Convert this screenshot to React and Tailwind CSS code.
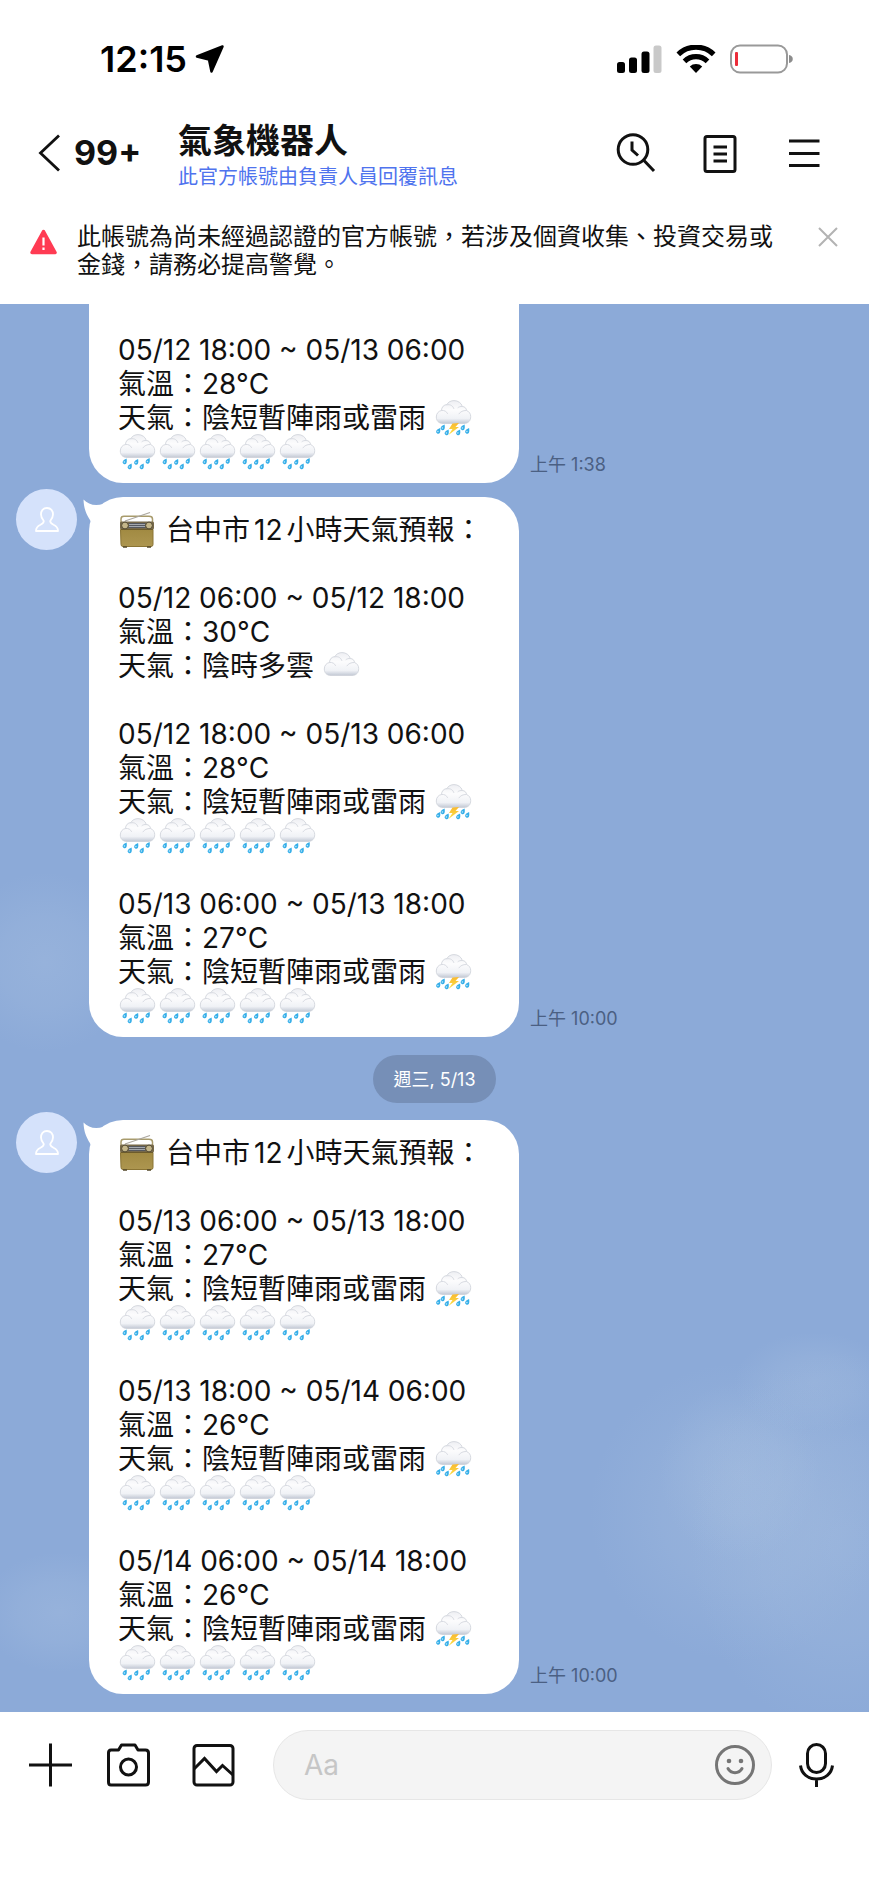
const RAIN = ["rain", "rain", "rain", "rain", "rain"];
const SHOWER = "陰短暫陣雨或雷雨";

const firstMessage = [
  { range: "05/12 18:00 ~ 05/13 06:00", temp: "28°C", weather: SHOWER, icon: "storm", extra: RAIN },
];

const secondMessage = [
  { range: "05/12 06:00 ~ 05/12 18:00", temp: "30°C", weather: "陰時多雲", icon: "cloud", extra: [] },
  { range: "05/12 18:00 ~ 05/13 06:00", temp: "28°C", weather: SHOWER, icon: "storm", extra: RAIN },
  { range: "05/13 06:00 ~ 05/13 18:00", temp: "27°C", weather: SHOWER, icon: "storm", extra: RAIN },
];

const thirdMessage = [
  { range: "05/13 06:00 ~ 05/13 18:00", temp: "27°C", weather: SHOWER, icon: "storm", extra: RAIN },
  { range: "05/13 18:00 ~ 05/14 06:00", temp: "26°C", weather: SHOWER, icon: "storm", extra: RAIN },
  { range: "05/14 06:00 ~ 05/14 18:00", temp: "26°C", weather: SHOWER, icon: "storm", extra: RAIN },
];

const CLOUD =
  "M9 23.5C4.500 23.500 2.300 20.500 2.300 17C2.300 13.500 4.500 11 7.500 10.500C7.500 7 10 4.600 13 4.600C14 2 17 0.600 20 0.600C24 0.600 27.500 3 28.300 6.500C30.800 6.500 32.500 8.500 32.500 10.500C35.300 11.500 36.700 14 36.700 16.500C36.700 20.500 34.500 23.500 30 23.500Z";

// gradients shared by every weather icon on the page
const Gradients = () => (
  <svg className="absolute h-0 w-0" aria-hidden="true">
    <defs>
      <linearGradient id="cloudFill" x1="0" y1="0" x2="0" y2="1">
        <stop offset="0" stopColor="#eeeff3" />
        <stop offset="0.4" stopColor="#fcfcfd" />
        <stop offset="0.78" stopColor="#f0f2f6" />
        <stop offset="1" stopColor="#c2c8d4" />
      </linearGradient>
      <linearGradient id="boltFill" x1="0" y1="0" x2="0" y2="1">
        <stop offset="0" stopColor="#f9b92e" />
        <stop offset="1" stopColor="#fde14a" />
      </linearGradient>
      <linearGradient id="radioBody" x1="0" y1="0" x2="0" y2="1">
        <stop offset="0" stopColor="#a18a42" />
        <stop offset="1" stopColor="#ad9650" />
      </linearGradient>
      <radialGradient id="haze">
        <stop offset="0" stopColor="#b4c9e4" stopOpacity="0.26" />
        <stop offset="0.5" stopColor="#adc4e2" stopOpacity="0.2" />
        <stop offset="1" stopColor="#a9c2e2" stopOpacity="0" />
      </radialGradient>
    </defs>
  </svg>
);

const Drop = ({ x, y }) => (
  <g transform={`translate(${x} ${y}) rotate(28)`}>
    <path d="M0 -3.4C1.300 -1.500 2 -0.500 2 0.800A2 2 0 0 1 -2 0.800C-2 -0.500 -1.300 -1.500 0 -3.400Z" fill="#35aee8" />
    <circle cx="-0.3" cy="0.700" r="0.8" fill="#b9e6fa" />
  </g>
);

const WeatherIcon = ({ kind }) => (
  <svg width="40" height="36" viewBox="0 0 40 36" className="shrink-0" role="img" aria-label={kind}>
    <g transform={kind === "cloud" ? "translate(0 4)" : undefined}>
      <path d={CLOUD} fill="url(#cloudFill)" stroke="#cdd0d8" strokeWidth="0.8" />
      <path
        d="M7.500 10.500C10.500 10 12.500 11.500 13.500 13.500M13 4.800C16.500 4 19 6 19.800 8.500M32 10.500C29 10.500 26.500 11.500 25 13.800M28 6.500C26.500 6.300 25 6.800 24 7.600"
        fill="none"
        stroke="#d8dbe2"
        strokeWidth="1"
        strokeLinecap="round"
      />
    </g>
    {kind === "rain" && (
      <g>
        <Drop x={7} y={27.5} />
        <Drop x={18.500} y={28} />
        <Drop x={30} y={27} />
        <Drop x={12} y={32.5} />
        <Drop x={24} y={32.5} />
      </g>
    )}
    {kind === "storm" && (
      <g>
        <Drop x={9} y={27.5} />
        <Drop x={4.5} y={31} />
        <Drop x={13} y={32.5} />
        <Drop x={29} y={27.5} />
        <Drop x={24.500} y={32.5} />
        <Drop x={33.500} y={31} />
        <path d="M18.500 23.500L25 23L21.500 27H25L14.500 35L18.500 29H15Z" fill="url(#boltFill)" />
      </g>
    )}
  </svg>
);

const RadioIcon = () => (
  <svg width="40" height="38" viewBox="0 0 40 38" className="shrink-0" role="img" aria-label="radio">
    <path d="M3 14V8C3 6 4 5.300 6 5.300H31C33.500 5.300 34.500 6 34.500 8V14" fill="none" stroke="#a89b6c" strokeWidth="1.500" />
    <path d="M7 10L32 1.500" stroke="#aaa69e" strokeWidth="1.200" />
    <rect x="2" y="10.500" width="34" height="8" rx="1.500" fill="#77694a" />
    <rect x="10.500" y="12" width="17" height="5" fill="#55585f" />
    <path d="M11 13.500H27M11 15.500H27" stroke="#b9bcc3" strokeWidth="0.8" />
    <path d="M2.500 18.500H35V33.500Q35 35.500 33 35.500H5Q3 35.500 3 33.500Z" fill="url(#radioBody)" stroke="#8a7434" strokeWidth="1" />
    <path d="M3 18.500H35" stroke="#6c5b2b" strokeWidth="1" />
    <circle cx="7" cy="14.500" r="3.400" fill="#c4b68a" stroke="#544b33" strokeWidth="1" />
    <circle cx="31" cy="14.500" r="3.400" fill="#c4b68a" stroke="#544b33" strokeWidth="1" />
    <path d="M5 36H9M29 36H33" stroke="#54482a" strokeWidth="1.500" />
  </svg>
);

const StatusBar = () => (
  <div className="flex h-[118px] items-center justify-between pl-[100px] pr-[75px]">
    <div className="flex items-center gap-2">
      <span className="text-[36px] font-semibold leading-none text-black">12:15</span>
      <svg width="30" height="30" viewBox="0 0 30 30">
        <path d="M27.500 2.500L2 12.500L14 15.500L16.500 27.500Z" fill="#000" stroke="#000" strokeWidth="2.500" strokeLinejoin="round" />
      </svg>
    </div>
    <div className="flex items-center gap-[14px]">
      <svg width="45" height="28" viewBox="0 0 45 28">
        <rect x="0" y="17" width="8" height="11" rx="2.500" fill="#000" />
        <rect x="12" y="12.500" width="8" height="15.500" rx="2.500" fill="#000" />
        <rect x="24.500" y="6.500" width="8" height="21.500" rx="2.500" fill="#000" />
        <rect x="36.500" y="0.500" width="8" height="27.500" rx="2.500" fill="#c9c9c9" />
      </svg>
      <svg width="40" height="28" viewBox="0 0 40 28">
        <path d="M20 28L13.800 21.600A9 9 0 0 1 26.200 21.600Z" fill="#000" />
        <path d="M8.500 16.300A16.500 16.500 0 0 1 31.500 16.300" fill="none" stroke="#000" strokeWidth="5.200" />
        <path d="M2.300 9.300A25.500 25.500 0 0 1 37.700 9.300" fill="none" stroke="#000" strokeWidth="5.200" />
      </svg>
      <svg width="64" height="30" viewBox="0 0 64 30">
        <rect x="1" y="1.500" width="56" height="27" rx="9" fill="none" stroke="#999" strokeWidth="2" />
        <rect x="5" y="8" width="3" height="14" rx="1" fill="#ec2d3a" />
        <path d="M59 11C64 11.500 64 18.500 59 19Z" fill="#8c8c8c" />
      </svg>
    </div>
  </div>
);

const Header = () => (
  <header className="flex h-[70px] items-center pl-[38px] pr-[45px] text-[#111]">
    <button type="button" className="flex w-[140px] items-center gap-[13px]" aria-label="返回">
      <svg width="23" height="38" viewBox="0 0 23 38" fill="none" stroke="currentColor" strokeWidth="2.800">
        <path d="M21 1.500L2.500 19L21 36.500" />
      </svg>
      <span className="text-[34px] font-bold leading-none">99+</span>
    </button>
    <div className="flex-1 pt-1">
      <h1 className="text-[34px] font-bold leading-[44px]">氣象機器人</h1>
      <p className="whitespace-nowrap text-[20px] leading-7 text-[#4f73ee]">此官方帳號由負責人員回覆訊息</p>
    </div>
    <div className="flex gap-[44px]">
      <button type="button" aria-label="搜尋">
        <svg width="40" height="40" viewBox="0 0 40 40" fill="none" stroke="currentColor" strokeWidth="3">
          <circle cx="17" cy="16.500" r="14.800" />
          <path d="M16 8.500V17L22 22.500M27.500 27L38 38" />
        </svg>
      </button>
      <button type="button" aria-label="記事本">
        <svg width="40" height="40" viewBox="0 0 40 40" fill="none" stroke="currentColor" strokeWidth="3">
          <rect x="5" y="3.500" width="30" height="35" rx="2" />
          <path d="M13.500 14H27M13.500 21H27M13.500 28H27" />
        </svg>
      </button>
      <button type="button" aria-label="選單">
        <svg width="40" height="40" viewBox="0 0 40 40" fill="none" stroke="currentColor" strokeWidth="3">
          <path d="M5 8H35.500M5 20.500H35.500M5 32.500H35.500" />
        </svg>
      </button>
    </div>
  </header>
);

const Notice = () => (
  <div className="flex items-start pt-[35px] pb-[25px] pl-[30px] pr-[31px]">
    <svg width="27" height="26" viewBox="0 0 27 26" className="mt-1.5 shrink-0">
      <path d="M13.500 2.500L25 23.500H2Z" fill="#ff3b53" stroke="#ff3b53" strokeWidth="3.500" strokeLinejoin="round" />
      <path d="M13.500 8.500V16.500M13.500 18.500V21" stroke="#fff" strokeWidth="2.200" />
    </svg>
    <p className="ml-5 max-w-[702px] flex-1 text-[24px] leading-7 text-[#111]">
      此帳號為尚未經過認證的官方帳號，若涉及個資收集、投資交易或金錢，請務必提高警覺。
    </p>
    <button type="button" className="ml-auto mt-1" aria-label="關閉">
      <svg width="20" height="20" viewBox="0 0 20 20" stroke="#b3b3b3" strokeWidth="2">
        <path d="M1 1L19 19M19 1L1 19" />
      </svg>
    </button>
  </div>
);

const Line = ({ children }) => (
  <p className="flex h-[34px] items-center whitespace-pre leading-[34px]">{children}</p>
);

const Forecast = ({ item }) => (
  <div>
    <Line>{item.range}</Line>
    <Line>氣溫：{item.temp}</Line>
    <Line>
      天氣：{item.weather} <WeatherIcon kind={item.icon} />
    </Line>
    {item.extra.length > 0 && (
      <Line>
        {item.extra.map((kind, i) => (
          <WeatherIcon key={i} kind={kind} />
        ))}
      </Line>
    )}
  </div>
);

const Avatar = () => (
  <div className="flex h-[61px] w-[61px] shrink-0 items-center justify-center rounded-full bg-[#d5e2fb]">
    <svg width="26" height="27" viewBox="0 0 26 27" fill="none" stroke="#fff" strokeWidth="1.800" strokeLinejoin="round">
      <path d="M13 2C9 2 7 4.800 7 8.500C7 11.500 8.500 13.500 9.800 15C9.800 17 8.500 17.800 6.500 18.800C3.500 20.200 2 21.500 2 25H24C24 21.500 22.500 20.200 19.500 18.800C17.500 17.800 16.200 17 16.200 15C17.500 13.500 19 11.500 19 8.500C19 4.800 17 2 13 2Z" />
    </svg>
  </div>
);

const Time = ({ children }) => (
  <time className="mb-1.5 ml-[11px] text-[18px] leading-6 text-[#4b6083]">{children}</time>
);

const Message = ({ items, time }) => (
  <div className="flex items-start pl-4">
    <Avatar />
    <div className="mt-2 ml-3 flex items-end">
      <div className="relative w-[430px] rounded-[34px] bg-white px-[29px] pt-4 pb-[14px] text-[28px] text-[#111]">
        <svg className="absolute -left-1.5 top-0.5" width="26" height="28" viewBox="0 0 26 28">
          <path d="M0.500 0.500C5 5.500 12 7.500 20 5L26 12L9 26C8 20 1 16 0.500 0.500Z" fill="#fff" />
        </svg>
        <Line>
          <RadioIcon />
          <span className="ml-2">台中市</span>
          <span className="mx-1">12</span>
          小時天氣預報：
        </Line>
        {items.map((item) => (
          <div key={item.range} className="mt-[34px]">
            <Forecast item={item} />
          </div>
        ))}
      </div>
      <Time>{time}</Time>
    </div>
  </div>
);

const Composer = () => (
  <footer className="flex items-center bg-white pt-[18px] pb-[84px] pl-7 pr-[31px] text-[#111]">
    <button type="button" aria-label="新增">
      <svg width="44" height="44" viewBox="0 0 44 44" stroke="currentColor" strokeWidth="3">
        <path d="M22.500 0.500V43.500M1 22H44" />
      </svg>
    </button>
    <button type="button" className="ml-[34px]" aria-label="相機">
      <svg width="44" height="44" viewBox="0 0 44 44" fill="none" stroke="currentColor" strokeWidth="3" strokeLinejoin="round">
        <path d="M5 7H12.500L15.500 2H29L32 7H39.500Q42.500 7 42.500 10V39Q42.500 42 39.500 42H5Q2.500 42 2.500 39V10Q2.500 7 5 7Z" />
        <circle cx="22.500" cy="24" r="8" />
      </svg>
    </button>
    <button type="button" className="ml-[41px]" aria-label="相簿">
      <svg width="44" height="44" viewBox="0 0 44 44" fill="none" stroke="currentColor" strokeWidth="3">
        <rect x="3" y="2.500" width="39" height="39.500" rx="3" />
        <path d="M3 26L13.500 15.500L25.500 28.500L31.500 22.500L42 32" />
      </svg>
    </button>
    <div className="ml-[38px] flex h-[70px] min-w-0 flex-1 items-center rounded-full border border-[#e6e6e6] bg-[#f4f4f4] pl-[30px] pr-4">
      <input
        type="text"
        placeholder="Aa"
        aria-label="輸入訊息"
        className="min-w-0 flex-1 bg-transparent text-[28px] outline-none placeholder:text-[#c6c6c6]"
      />
      <button type="button" aria-label="貼圖">
        <svg width="40" height="40" viewBox="0 0 40 40" fill="none" stroke="#757575" strokeWidth="3">
          <circle cx="20" cy="20" r="18.500" />
          <circle cx="14" cy="16" r="2.300" fill="#757575" stroke="none" />
          <circle cx="26" cy="16" r="2.300" fill="#757575" stroke="none" />
          <path d="M13 23.500C16 29 24 29 27 23.500" strokeLinecap="round" />
        </svg>
      </button>
    </div>
    <button type="button" className="ml-[22px]" aria-label="語音">
      <svg width="44" height="44" viewBox="0 0 44 44" fill="none" stroke="currentColor" strokeWidth="3">
        <rect x="13.500" y="1.500" width="18" height="28" rx="9" />
        <path d="M6.500 22.500C7.500 31 14 36 22.500 36C31 36 37.500 31 38.500 22.500M22.500 36V44" />
      </svg>
    </button>
  </footer>
);

const Sky = () => (
  <>
    <svg className="absolute bottom-0 right-0" width="320" height="400" viewBox="0 0 320 400" aria-hidden="true">
      <ellipse cx="190" cy="200" rx="150" ry="150" fill="url(#haze)" />
      <ellipse cx="265" cy="70" rx="80" ry="50" fill="url(#haze)" />
      <ellipse cx="190" cy="160" rx="80" ry="90" fill="url(#haze)" />
      <ellipse cx="290" cy="230" rx="150" ry="190" fill="url(#haze)" />
    </svg>
    <svg className="absolute bottom-[640px] left-0" width="160" height="200" viewBox="0 0 160 200" aria-hidden="true">
      <ellipse cx="45" cy="90" rx="90" ry="90" fill="url(#haze)" />
    </svg>
    <svg className="absolute bottom-0 left-0" width="120" height="190" viewBox="0 0 120 190" aria-hidden="true">
      <ellipse cx="60" cy="90" rx="80" ry="60" fill="url(#haze)" />
    </svg>
  </>
);

const App = () => {
  return (
    <div lang="zh-Hant" className="bg-white font-[Inter,'Noto_Sans_CJK_TC',sans-serif]">
      <Gradients />
      <StatusBar />
      <Header />
      <Notice />
      <main className="relative overflow-hidden bg-[#8caad8] pb-[18px]">
        <Sky />
        <div className="relative">
          <div className="flex items-end pl-[89px]">
            <div className="w-[430px] rounded-b-[34px] bg-white px-[29px] pt-[29px] pb-[14px] text-[28px] text-[#111]">
              {firstMessage.map((item) => (
                <Forecast key={item.range} item={item} />
              ))}
            </div>
            <Time>上午 1:38</Time>
          </div>
          <div className="mt-1.5">
            <Message items={secondMessage} time="上午 10:00" />
          </div>
          <div className="mt-[18px] mb-[9px] flex justify-center">
            <span className="flex h-12 items-center rounded-full bg-[#768fb7] px-5 text-[18px] text-white">週三, 5/13</span>
          </div>
          <Message items={thirdMessage} time="上午 10:00" />
        </div>
      </main>
      <Composer />
    </div>
  );
};

export default App;
